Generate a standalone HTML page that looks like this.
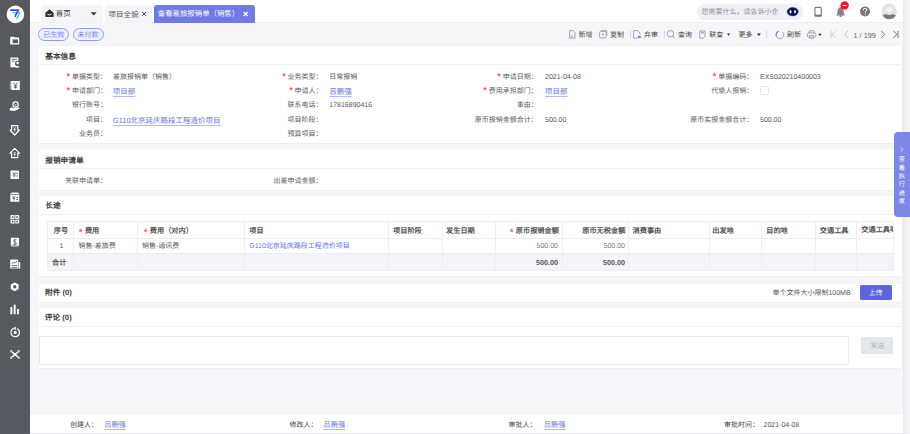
<!DOCTYPE html>
<html lang="zh-CN">
<head>
<meta charset="utf-8">
<style>
*{margin:0;padding:0;box-sizing:border-box}
html,body{width:910px;height:434px;overflow:hidden}
body{position:relative;background:#f6f6f8;text-rendering:geometricPrecision;font-family:"Liberation Sans",sans-serif;color:#333;font-size:7px}
.a{position:absolute}
.t{position:absolute;white-space:nowrap;line-height:10px;height:10px}
svg{position:absolute;overflow:visible}
#side{left:0;top:0;width:30px;height:434px;background:#58595e}
#hdr{left:30px;top:0;width:880px;height:23px;background:#fff;border-bottom:1px solid #efeff3}
.tab{position:absolute;background:#f5f5f8;border-radius:3px 3px 0 0}
.panel{position:absolute;left:39px;width:862px;background:#fff;box-shadow:0 1px 0 #eeeef3,0 -0.5px 0 #f1f1f4}
.ph{position:absolute;white-space:nowrap;font-size:7.7px;font-weight:bold;color:#404040;line-height:10px;height:10px}
.dv{position:absolute;left:39px;width:862px;height:1px;background:#f1f1f5}
.lb{position:absolute;white-space:nowrap;text-align:right;color:#5a5a5a;line-height:10px;height:10px;font-size:7px}
.ft{color:#444}
.vl{position:absolute;white-space:nowrap;color:#555;line-height:10px;height:10px;font-size:7px}
.st{position:absolute;color:#f04a4a;font-size:9px;line-height:10px;height:10px}
.lk{position:absolute;white-space:nowrap;color:#6a73e4;line-height:10px;height:10px;font-size:7.5px}
.ul{position:absolute;height:1px;background:#b3b7f2}
.tb{position:absolute;white-space:nowrap;color:#444;line-height:10px;height:10px;font-size:7px}
#scroll{left:903px;top:0;width:7px;height:434px;background:linear-gradient(90deg,#e9e9ed,#f1f1f4 40%,#f3f3f6)}
.vline{position:absolute;width:1px;background:#efeff3}
.hline{position:absolute;height:1px;background:#ededf2}
.th{position:absolute;white-space:nowrap;color:#555;font-weight:bold;line-height:10px;height:10px;font-size:7.2px}
.th .rq{font-size:11px;margin-right:2px;line-height:10px;position:relative;top:1.8px}
.td{position:absolute;white-space:nowrap;color:#555;line-height:10px;height:10px;font-size:7px}
.rq{color:#f04a4a;font-size:10.5px;margin-right:1.6px;font-weight:normal;vertical-align:top;line-height:10px;position:relative;top:-0.9px}
.lk{text-decoration:underline;text-decoration-thickness:1px;text-decoration-color:#b3b7f2;text-underline-offset:1.6px}
</style>
</head>
<body>
<div id="side" class="a"></div>
<div id="hdr" class="a"></div>
<!-- sidebar icons -->
<svg style="left:0;top:0" width="30" height="434" viewBox="0 0 30 434">
  <circle cx="15.4" cy="14.4" r="8.8" fill="#fff"/>
  <path d="M12.4 12.6 H19.8 L16.6 19.2" fill="none" stroke="#35d2f0" stroke-width="1.3"/>
  <path d="M10.2 10.1 H18.3 L14.8 16.9" fill="none" stroke="#6a36f4" stroke-width="1.7" stroke-linejoin="miter"/>
  <g fill="#fff" stroke="#fff">
    <!-- 1 folder -->
    <path d="M10.2 37.6 Q10.2 36.8 11 36.8 H14 L14.8 37.6 H18.4 Q19.2 37.6 19.2 38.4 V44.4 H10.2 Z" stroke="none"/>
    <rect x="12.6" y="39.4" width="5.4" height="3.8" fill="#58595e" stroke="none"/>
    <!-- 2 doc person -->
    <rect x="10.4" y="57.4" width="8" height="9.8" rx="0.5" stroke="none"/>
    <path d="M11.8 59.3 H17 M11.8 61.2 H15" stroke="#58595e" stroke-width="0.9"/>
    <circle cx="17.6" cy="63.4" r="2.6" fill="#58595e" stroke="none"/>
    <circle cx="17.6" cy="63" r="1.2" stroke="none"/>
    <path d="M15.4 67.4 Q17.6 64.4 19.8 67.4 Z" stroke="none"/>
    <!-- 3 ledger yen -->
    <rect x="11.2" y="80.9" width="8.6" height="9.1" rx="0.5" stroke="none"/>
    <path d="M10.3 81.8 V89.4" stroke="#fff" stroke-width="1.1" stroke-dasharray="1 0.9"/>
    <path d="M13.4 82.6 L15.5 85.3 L17.6 82.6 M15.5 85.3 V88.6 M13.8 85.9 H17.2 M13.8 87.2 H17.2" stroke="#58595e" stroke-width="0.9" fill="none"/>
    <!-- 4 hand coin -->
    <circle cx="15.6" cy="104.6" r="2.7" fill="none" stroke-width="1.1"/>
    <path d="M14.4 103.6 L15.6 105 L16.8 103.6 M15.6 105 V106.4" stroke-width="0.7" fill="none"/>
    <path d="M9.8 108.4 Q11.6 107 13.6 108 L18.6 107.4 Q19.9 107.6 19.4 108.8 L14.6 111 L9.8 110.4 Z" stroke="none"/>
    <!-- 5 down arrow -->
    <path d="M11.6 125.6 H17.8 V130 H19.4 L14.7 135 L10 130 H11.6 Z" fill="none" stroke-width="1.2" stroke-linejoin="round"/>
    <path d="M13.5 127.2 L14.7 128.8 L15.9 127.2 M14.7 128.8 V131.6 M13.6 129.6 H15.8" stroke-width="0.7" fill="none"/>
    <!-- 6 up house -->
    <path d="M14.7 148.4 L19.4 153.2 H17.8 V157.6 H11.6 V153.2 H10 Z" fill="none" stroke-width="1.2" stroke-linejoin="round"/>
    <path d="M13.5 152 L14.7 153.6 L15.9 152 M14.7 153.6 V156.4 M13.6 154.4 H15.8" stroke-width="0.7" fill="none"/>
    <!-- 7 doc yen -->
    <rect x="10.5" y="170.5" width="8.5" height="8.5" rx="0.6" stroke="none"/>
    <!-- 8 box yen -->
    <path d="M10.3 194.6 Q10.3 192.6 12.3 192.6 H17.3 Q19.3 192.6 19.3 194.6 V201.7 H10.3 Z" stroke="none"/>
    <!-- 9 grid -->
    <rect x="10.5" y="215" width="8.7" height="8.6" rx="0.8" stroke="none"/>
    <!-- 10 book $ -->
    <rect x="10.8" y="237.8" width="8.2" height="8.8" rx="0.5" stroke="none"/>
    <!-- 11 chart doc -->
    <rect x="10.2" y="259.4" width="8" height="9.2" rx="0.5" stroke="none"/>
    <rect x="18.6" y="262" width="1.6" height="6.6" stroke="none"/>
    <!-- 12 gear -->
    <path d="M14.7 282.4 L18.6 284.6 V289 L14.7 291.2 L10.8 289 V284.6 Z" stroke="none"/>
    <!-- 13 bars -->
    <rect x="10.4" y="307" width="1.9" height="7.3" stroke="none"/>
    <rect x="13.7" y="304.6" width="1.9" height="9.7" stroke="none"/>
    <rect x="17" y="309" width="1.9" height="5.3" stroke="none"/>
    <!-- 14 refresh -->
    <path d="M13.6 328.4 A4.3 4.3 0 1 0 17.2 328.6" fill="none" stroke-width="1.2"/>
    <path d="M15.6 326.6 L13.2 328.3 L15.8 329.9 Z" stroke="none"/>
    <circle cx="15.2" cy="332.4" r="1.6" stroke="none"/>
    <!-- 15 tools -->
    <path d="M11.2 351.2 L18.8 357.8 M18.8 351.2 L11.2 357.8" stroke-width="1.4" fill="none"/>
    <circle cx="11.2" cy="351.2" r="1.1" stroke="none"/><circle cx="18.8" cy="351.2" r="1.1" stroke="none"/>
    <circle cx="11.2" cy="357.8" r="1.1" stroke="none"/><circle cx="18.8" cy="357.8" r="1.1" stroke="none"/>
    <circle cx="15" cy="354.5" r="1.3" stroke="none"/>
  </g>
  <g fill="#58595e" stroke="none">
    <path d="M12.8 172.2 L14.2 174 L15.6 172.2 M14.2 174 V177.2 M12.8 175 H15.6" stroke="#58595e" stroke-width="0.9" fill="none"/>
    <rect x="16.4" y="173" width="1.6" height="0.9"/><rect x="16.4" y="175.5" width="1.6" height="0.9"/>
    <path d="M12.5 196 L13.9 197.6 L15.3 196 M13.9 197.6 V200.4 M12.6 198.4 H15.2" stroke="#58595e" stroke-width="0.9" fill="none"/>
    <rect x="16.2" y="197" width="1.8" height="0.9"/><rect x="16.2" y="199" width="1.8" height="0.9"/>
    <rect x="10.3" y="194.2" width="9" height="0.7"/>
    <rect x="14.5" y="215" width="0.8" height="8.6"/><rect x="10.5" y="218.9" width="8.7" height="0.8"/>
    <rect x="11.9" y="216.3" width="1.6" height="1.6"/><rect x="16.3" y="216.3" width="1.6" height="1.6"/>
    <rect x="11.9" y="220.8" width="1.6" height="1.6"/><rect x="16.3" y="220.8" width="1.6" height="1.6"/>
    <path d="M16.7 239.8 Q13.2 239.5 13.6 241.2 Q14 242.4 15.5 242.4 Q17 242.6 16.3 244 Q15.4 244.8 13 244.3 M14.9 238.9 V245.2" stroke="#58595e" stroke-width="0.8" fill="none"/>
    <rect x="10.8" y="245.6" width="8.2" height="0.6"/>
    <path d="M11.6 264 L13.6 262 L15 263.2 L17 261" stroke="#58595e" stroke-width="0.8" fill="none"/>
    <rect x="11.5" y="265" width="5.5" height="0.8"/><rect x="11.5" y="267" width="5.5" height="0.8"/>
    <circle cx="14.7" cy="286.8" r="1.7"/>
  </g>
  <circle cx="11.2" cy="351.2" r="0.5" fill="#58595e"/><circle cx="18.8" cy="351.2" r="0.5" fill="#58595e"/><circle cx="11.2" cy="357.8" r="0.5" fill="#58595e"/><circle cx="18.8" cy="357.8" r="0.5" fill="#58595e"/>
</svg>
<!-- tabs -->
<div class="tab" style="left:41px;top:5px;width:62px;height:17.5px"></div>
<div class="tab" style="left:105px;top:4.5px;width:47px;height:18px"></div>
<div class="tab" style="left:154px;top:4.5px;width:100.5px;height:18.5px;background:#6e7ae6"></div>
<svg style="left:0;top:0" width="1" height="1">
  <path d="M49.5 9.2 L53.6 12.8 V17 H45.4 V12.8 Z" fill="#333"/>
  <path d="M47.6 14.2 Q49.5 15.6 51.4 14.2" stroke="#fff" stroke-width="0.9" fill="none"/>
  <path d="M90.7 12.2 H96.7 L93.7 15.6 Z" fill="#333"/>
</svg>
<div class="t" style="left:55.8px;top:8.8px;font-size:7.5px;color:#3a3a3a">首页</div>
<div class="t" style="left:108.5px;top:9.5px;font-size:7.5px;color:#555">项目全貌</div>
<svg style="left:0;top:0" width="1" height="1">
  <path d="M142.3 12 L146 15.8 M146 12 L142.3 15.8" stroke="#333" stroke-width="1"/>
  <path d="M243.6 12 L247.8 16 M247.8 12 L243.6 16" stroke="#fff" stroke-width="1.2"/>
</svg>
<div class="t" style="left:157.8px;top:9.4px;font-size:7.4px;color:#fff">查看差旅报销单（销售）</div>

<!-- search -->
<div class="a" style="left:697px;top:4px;width:106px;height:15.6px;border-radius:8px;background:#f0f0f6"></div>
<div class="t" style="left:701.6px;top:7.8px;font-size:7px;color:#8c8c8c">您需要什么，请告诉小企</div>
<svg style="left:0;top:0" width="1" height="1">
  <ellipse cx="792.7" cy="11.7" rx="5.6" ry="4.2" fill="#0a0f3e" stroke="#3a4ad8" stroke-width="0.6"/>
  <ellipse cx="790.5" cy="11.8" rx="1" ry="1.7" fill="#fff"/>
  <ellipse cx="795" cy="11.8" rx="1" ry="1.7" fill="#e8f0e8"/>
  <!-- phone -->
  <rect x="814.9" y="7.4" width="6.4" height="8.8" rx="1" fill="none" stroke="#777" stroke-width="1.1"/>
  <rect x="815" y="14.6" width="6.2" height="1.6" fill="#777"/>
  <!-- bell -->
  <path d="M840.6 7.3 Q843.6 7.6 843.7 11.2 L843.9 13.6 Q844.3 14.8 845.3 15.4 H835.9 Q836.9 14.8 837.3 13.6 L837.5 11.2 Q837.6 7.6 840.6 7.3 Z" fill="#858585"/>
  <ellipse cx="840.6" cy="16" rx="1.3" ry="1" fill="#858585"/>
  <circle cx="844.6" cy="5.4" r="4.2" fill="#f0141e"/>
  <rect x="842.6" y="5" width="4" height="1" fill="#fff"/>
  <!-- help -->
  <circle cx="865" cy="11.5" r="5" fill="#777"/>
  <path d="M863.3 10.2 Q863.3 8.3 865 8.3 Q866.8 8.3 866.8 10 Q866.8 11 865.3 11.8 V12.8" fill="none" stroke="#fff" stroke-width="1"/>
  <circle cx="865.3" cy="14.5" r="0.6" fill="#fff"/>
  <!-- avatar -->
  <circle cx="889.2" cy="11.5" r="7.7" fill="#e4e4e4"/>
  <circle cx="889.2" cy="9.6" r="3.2" fill="#f2f2f2"/>
  <path d="M882.4 15.4 Q885 14 887.4 14.4 Q889.2 15.8 891 14.4 Q893.4 14 896 15.4 Q893.5 19 889.2 19.2 Q885 19 882.4 15.4 Z" fill="#7a7a7a"/>
</svg>
<!-- pills -->
<div class="a" style="left:38.2px;top:28.3px;width:30.5px;height:13px;border:1px solid #959cf0;border-radius:7px;background:#eef0fd"></div>
<div class="a" style="left:72.8px;top:28.3px;width:31px;height:13px;border:1px solid #959cf0;border-radius:7px;background:#eef0fd"></div>
<div class="t" style="left:43.3px;top:31px;color:#7b84ea;font-size:7px">已生效</div>
<div class="t" style="left:77.6px;top:31px;color:#7b84ea;font-size:7px">未付款</div>

<!-- toolbar -->
<div class="tb" style="left:578.5px;top:30.6px">新增</div>
<div class="tb" style="left:610px;top:30.6px">复制</div>
<div class="tb" style="left:644px;top:30.6px">弃审</div>
<div class="tb" style="left:678px;top:30.6px">查询</div>
<div class="tb" style="left:709.2px;top:30.6px">联查</div>
<div class="tb" style="left:738.6px;top:30.6px">更多</div>
<div class="tb" style="left:787px;top:30.6px">刷新</div>
<div class="tb" style="left:853.5px;top:30.6px;color:#666;font-size:7.3px">1 / 199</div>
<svg style="left:0;top:0" width="1" height="1">
  <!-- new -->
  <path d="M569.6 30.6 H573 L575 32.6 V38.1 H569.6 Z" fill="none" stroke="#999" stroke-width="0.9"/>
  <path d="M570.8 37 L572.6 35.2 V37 Z" fill="#7a7ff0"/>
  <!-- copy -->
  <rect x="599.6" y="31.3" width="6.6" height="6.6" rx="1.2" fill="none" stroke="#999" stroke-width="0.9"/>
  <path d="M601.4 31.3 V30.6 H606.9 V36" fill="none" stroke="#999" stroke-width="0.7"/>
  <path d="M601.8 34.6 L602.9 33.5 L604 34.6 L602.9 35.7 Z" fill="#7a7ff0"/>
  <rect x="630" y="30.2" width="0.8" height="8.2" fill="#d0d2ea"/>
  <!-- abandon -->
  <path d="M633.6 30.6 H637.6 L640 33 V34.5 M633.6 30.6 V38.1 H637" fill="none" stroke="#999" stroke-width="0.9"/>
  <rect x="637.8" y="35.8" width="3" height="2.3" fill="#7a7ff0"/>
  <rect x="664" y="30.2" width="0.8" height="8.2" fill="#d0d2ea"/>
  <!-- search -->
  <circle cx="670.4" cy="33.7" r="3.2" fill="none" stroke="#999" stroke-width="0.9"/>
  <path d="M672.8 36.1 L674.8 38.3" stroke="#7a7ff0" stroke-width="0.9"/>
  <!-- link -->
  <path d="M699.8 31 H705 V36.2 L703 38.1 H699.8 Z" fill="none" stroke="#999" stroke-width="0.9"/>
  <rect x="701" y="32" width="3" height="1.5" fill="#9aa0f5"/>
  <path d="M727 33.6 H730.2 L728.6 35.8 Z" fill="#222"/>
  <path d="M757 33.6 H760.8 L758.9 35.9 Z" fill="#222"/>
  <rect x="766.3" y="30.2" width="0.8" height="8.2" fill="#d0d2ea"/>
  <!-- refresh -->
  <path d="M778.5 31.4 A3.8 3.8 0 1 0 782.4 32" fill="none" stroke="#999" stroke-width="0.9"/>
  <path d="M776.6 36.6 A3.8 3.8 0 0 1 778.6 31.3" fill="none" stroke="#7a7ff0" stroke-width="1.1"/>
  <!-- printer -->
  <path d="M809 33 V31.6 Q809 30.8 809.8 30.8 H813.4 Q814.2 30.8 814.2 31.6 V33" fill="none" stroke="#999" stroke-width="0.9"/>
  <rect x="807.4" y="33" width="8.4" height="4.2" rx="1.4" fill="none" stroke="#999" stroke-width="0.9"/>
  <rect x="809.4" y="35.6" width="4.4" height="2.8" fill="#c9c6f2" stroke="#999" stroke-width="0.6"/>
  <path d="M818.3 33.8 H821.6 L819.95 35.9 Z" fill="#222"/>
  <!-- pager -->
  <path d="M831 30.8 V38 M835.8 30.8 L832 34.4 L835.8 38" fill="none" stroke="#c4c4c4" stroke-width="0.8"/>
  <path d="M848.2 30.8 L844.6 34.4 L848.2 38" fill="none" stroke="#b5b5b5" stroke-width="0.8"/>
  <path d="M881 30.8 L884.8 34.4 L881 38" fill="none" stroke="#777" stroke-width="0.9"/>
  <path d="M893.2 30.8 L897 34.4 L893.2 38 M898 30.8 V38" fill="none" stroke="#666" stroke-width="0.9"/>
</svg>
<!-- panels -->
<div class="panel" style="top:46px;height:96.6px"></div>
<div class="panel" style="top:149.3px;height:40.7px"></div>
<div class="panel" style="top:195.7px;height:80.7px"></div>
<div class="panel" style="top:283.6px;height:18.7px"></div>
<div class="panel" style="top:308.3px;height:59.4px"></div>
<div class="dv" style="top:64px"></div>
<div class="dv" style="top:168px"></div>
<div class="dv" style="top:214.2px"></div>
<div class="dv" style="top:326.4px"></div>
<div class="ph" style="left:45.2px;top:51.8px">基本信息</div>
<div class="ph" style="left:45.2px;top:155.6px">报销申请单</div>
<div class="ph" style="left:45.2px;top:201.4px">长途</div>
<div class="ph" style="left:45px;top:288.3px">附件 (0)</div>
<div class="ph" style="left:44.8px;top:312.5px">评论 (0)</div>

<!-- form rows -->
<div class="lb" style="left:7px;width:100px;top:73.3px"><span class="rq">*</span>单据类型：</div>
<div class="vl" style="left:113px;top:73.3px">差旅报销单（销售）</div>
<div class="lb" style="left:222.6px;width:100px;top:73.3px"><span class="rq">*</span>业务类型：</div>
<div class="vl" style="left:329.3px;top:73.3px">日常报销</div>
<div class="lb" style="left:437.7px;width:100px;top:73.3px"><span class="rq">*</span>申请日期：</div>
<div class="vl" style="left:545px;top:73.3px">2021-04-08</div>
<div class="lb" style="left:653.3px;width:100px;top:73.3px"><span class="rq">*</span>单据编码：</div>
<div class="vl" style="left:760px;top:73.3px">EXS020210400003</div>

<div class="lb" style="left:7px;width:100px;top:87.1px"><span class="rq">*</span>申请部门：</div>
<div class="lk" style="left:112.8px;top:87.1px">项目部</div>
<div class="lb" style="left:222.6px;width:100px;top:87.1px"><span class="rq">*</span>申请人：</div>
<div class="lk" style="left:329.3px;top:87.1px">吕鹏强</div>
<div class="lb" style="left:437.7px;width:100px;top:87.1px"><span class="rq">*</span>费用承担部门：</div>
<div class="lk" style="left:545px;top:87.1px">项目部</div>
<div class="lb" style="left:653.3px;width:100px;top:87.1px">代垫人报销：</div>
<div class="a" style="left:760px;top:86px;width:8.6px;height:9.3px;border:1px solid #e6e6ea;border-radius:1.5px;background:#fff"></div>

<div class="lb" style="left:7px;width:100px;top:101.3px">银行账号：</div>
<div class="lb" style="left:222.6px;width:100px;top:101.3px">联系电话：</div>
<div class="vl" style="left:329.3px;top:101.3px">17816890416</div>
<div class="lb" style="left:437.7px;width:100px;top:101.3px">事由：</div>

<div class="lb" style="left:7px;width:100px;top:115.5px">项目：</div>
<div class="lk" style="left:112.8px;top:115.5px">G110北京延庆路段工程造价项目</div>
<div class="lb" style="left:222.6px;width:100px;top:115.5px">项目阶段：</div>
<div class="lb" style="left:437.7px;width:100px;top:115.5px">原币报销金额合计：</div>
<div class="vl" style="left:545px;top:115.5px">500.00</div>
<div class="lb" style="left:653.3px;width:100px;top:115.5px">原币实报金额合计：</div>
<div class="vl" style="left:760px;top:115.5px">500.00</div>

<div class="lb" style="left:7px;width:100px;top:129.5px">业务员：</div>
<div class="lb" style="left:222.6px;width:100px;top:129.5px">预算项目：</div>

<div class="lb" style="left:7px;width:100px;top:176.5px">关联申请单：</div>
<div class="lb" style="left:222.6px;width:100px;top:176.5px">出差申请金额：</div>
<!-- table -->
<div class="a" style="left:47.5px;top:253.4px;width:845.5px;height:17px;background:#f4f4f9"></div>
<div class="hline" style="left:47.5px;top:220.8px;width:845.5px"></div>
<div class="hline" style="left:47.5px;top:237.5px;width:845.5px"></div>
<div class="hline" style="left:47.5px;top:253px;width:845.5px"></div>
<div class="hline" style="left:47.5px;top:270px;width:845.5px"></div>
<div class="vline" style="left:47.2px;top:220.8px;height:49.5px"></div>
<div class="vline" style="left:73.3px;top:220.8px;height:49.5px"></div>
<div class="vline" style="left:137.1px;top:220.8px;height:49.5px"></div>
<div class="vline" style="left:244.2px;top:220.8px;height:49.5px"></div>
<div class="vline" style="left:388.4px;top:220.8px;height:49.5px"></div>
<div class="vline" style="left:441.9px;top:220.8px;height:49.5px"></div>
<div class="vline" style="left:494.7px;top:220.8px;height:49.5px"></div>
<div class="vline" style="left:562.4px;top:220.8px;height:49.5px"></div>
<div class="vline" style="left:628px;top:220.8px;height:49.5px"></div>
<div class="vline" style="left:708.9px;top:220.8px;height:49.5px"></div>
<div class="vline" style="left:761.4px;top:220.8px;height:49.5px"></div>
<div class="vline" style="left:814.7px;top:220.8px;height:49.5px"></div>
<div class="vline" style="left:856.3px;top:220.8px;height:49.5px"></div>
<div class="vline" style="left:892.7px;top:220.8px;height:49.5px"></div>

<div class="th" style="left:53.8px;top:225.8px">序号</div>
<div class="th" style="left:78.6px;top:225.8px"><span class="rq">*</span>费用</div>
<div class="th" style="left:143.5px;top:225.8px"><span class="rq">*</span>费用（对内）</div>
<div class="th" style="left:249.2px;top:225.8px">项目</div>
<div class="th" style="left:393px;top:225.8px">项目阶段</div>
<div class="th" style="left:446px;top:225.8px">发生日期</div>
<div class="th" style="left:509.5px;top:225.8px"><span class="rq">*</span>原币报销金额</div>
<div class="th" style="left:582.2px;top:225.8px">原币无税金额</div>
<div class="th" style="left:632.5px;top:225.8px">消费事由</div>
<div class="th" style="left:712.2px;top:225.8px">出发地</div>
<div class="th" style="left:766.2px;top:225.8px">目的地</div>
<div class="th" style="left:819.8px;top:225.8px">交通工具</div>
<div class="a" style="left:857px;top:222px;width:35.5px;height:15px;overflow:hidden"><div class="th" style="left:4.3px;top:3px">交通工具等级</div></div>

<div class="td" style="left:59.6px;top:242.1px">1</div>
<div class="td" style="left:78.4px;top:242.1px">销售-差旅费</div>
<div class="td" style="left:142px;top:242.1px">销售-通讯费</div>
<div class="td" style="left:249.2px;top:242.1px;color:#6a73e4;font-size:7px">G110北京延庆路段工程造价项目</div>
<div class="td" style="left:500px;top:242.1px;width:58px;text-align:right;color:#777">500.00</div>
<div class="td" style="left:567px;top:242.1px;width:58px;text-align:right;color:#777">500.00</div>
<div class="th" style="left:52px;top:257.5px">合计</div>
<div class="th" style="left:500px;top:257.5px;width:58px;text-align:right">500.00</div>
<div class="th" style="left:567px;top:257.5px;width:58px;text-align:right">500.00</div>

<!-- attachments -->
<div class="t" style="left:772.4px;top:288.9px;color:#555;font-size:7px">单个文件大小限制100MB</div>
<div class="a" style="left:860.1px;top:285.3px;width:31.5px;height:15px;background:#5c64e2;border-radius:1.5px"></div>
<div class="t" style="left:868.8px;top:288.6px;color:#fff;font-size:7px">上传</div>

<!-- comment -->
<div class="a" style="left:39px;top:336.3px;width:810px;height:29.2px;border:1px solid #ededf1;border-left-color:#e6e6ea;background:#fff"></div>
<div class="a" style="left:860.8px;top:336.9px;width:32.5px;height:17px;background:#e3e6ea;border-radius:1.5px"></div>
<div class="t" style="left:870.2px;top:341.9px;color:#b2b5bb;font-size:7px">发送</div>

<!-- footer -->
<div class="a" style="left:30px;top:412.5px;width:873px;height:21.5px;background:#fff;border-top:1px solid #efeff3;border-bottom:1px solid #e9e9ed"></div>
<div class="lb ft" style="left:-2px;width:100px;top:421px;font-size:7px">创建人：</div>
<div class="lk" style="left:104.2px;top:420px;font-size:7.2px;text-underline-offset:2.2px">吕鹏强</div>
<div class="lb ft" style="left:217.5px;width:100px;top:421px;font-size:7px">修改人：</div>
<div class="lk" style="left:323.5px;top:420px;font-size:7.2px;text-underline-offset:2.2px">吕鹏强</div>
<div class="lb ft" style="left:436.5px;width:100px;top:421px;font-size:7px">审批人：</div>
<div class="lk" style="left:543.8px;top:420px;font-size:7.2px;text-underline-offset:2.2px">吕鹏强</div>
<div class="lb ft" style="left:659px;width:100px;top:421px;font-size:7px">审批时间：</div>
<div class="vl" style="left:763.5px;top:421px;font-size:7px">2021-04-08</div>

<div id="scroll" class="a"></div>
<!-- float tab -->
<div class="a" style="left:894.4px;top:132.2px;width:16px;height:85px;background:#7d87e9;border-radius:4px 0 0 4px"></div>
<svg style="left:0;top:0" width="1" height="1"><path d="M900.6 147.3 L902.8 149.5 L900.6 151.7" fill="none" stroke="#fff" stroke-width="0.7"/></svg>
<div class="a" style="left:897.8px;top:156.4px;width:8px;font-size:6.2px;line-height:8.3px;color:#fff;text-align:center">查<br>看<br>执<br>行<br>进<br>度</div>
</body>
</html>
